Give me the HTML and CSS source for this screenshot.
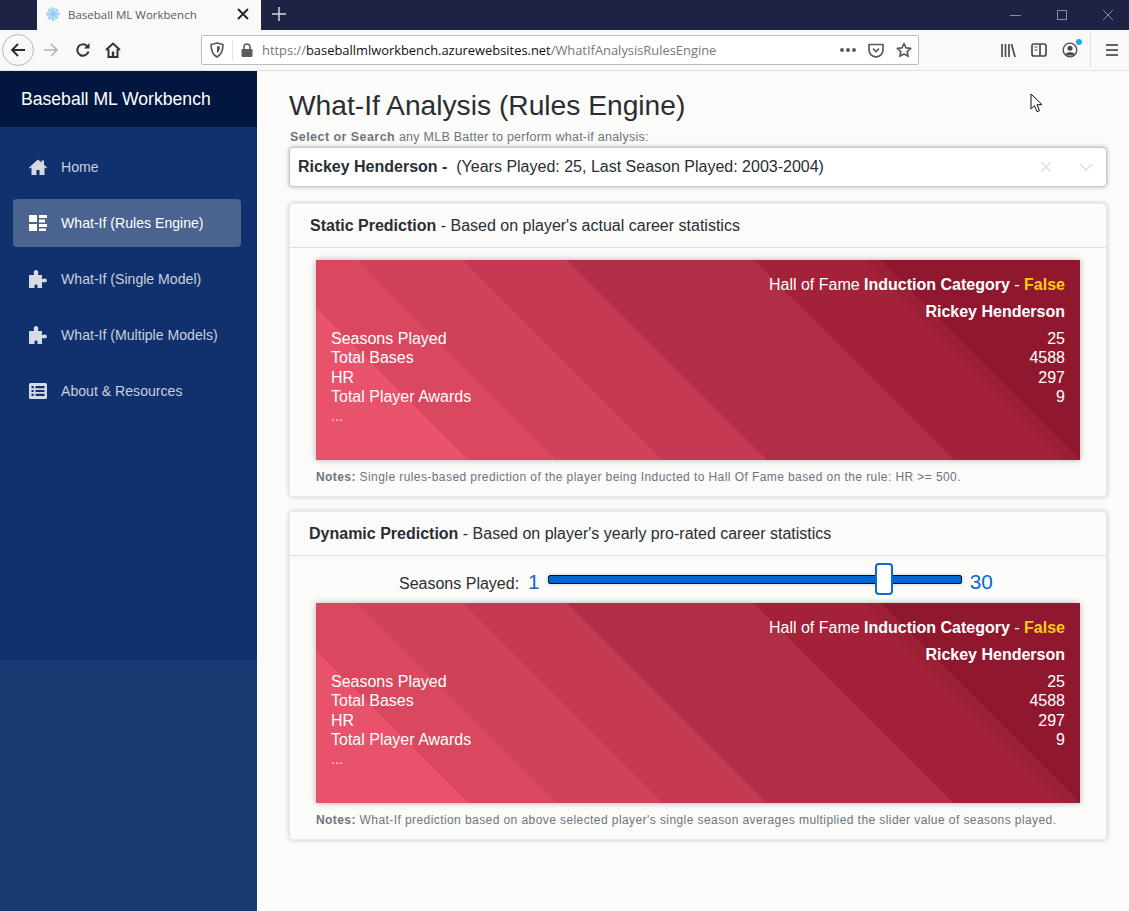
FILE: index.html
```html
<!DOCTYPE html>
<html lang="en">
<head>
    <meta charset="UTF-8">
    <title>Baseball ML Workbench</title>
    <link rel="stylesheet" href="styles.css">
</head>
<body>
    <!-- browser title bar -->
    <div class="titlebar">
        <div class="tab">
            <svg class="tab-logo" viewBox="0 0 16 16" width="16" height="16"><circle cx="8" cy="8" r="6.5" fill="#bfe3f5"/><path d="M8 1v14M1 8h14M3 3l10 10M13 3L3 13" stroke="#7cc6ea"/></svg>
            <span class="tab-title">Baseball ML Workbench</span>
            <svg class="tab-close" viewBox="0 0 12 12" width="12" height="12"><path d="M1 1l10 10M11 1L1 11" stroke="#222" stroke-width="1.8"/></svg>
        </div>
        <svg class="newtab" viewBox="0 0 14 14" width="14" height="14"><path d="M7 0v14M0 7h14" stroke="#d5d6de" stroke-width="1.5"/></svg>
        <div class="win-controls">
            <svg viewBox="0 0 12 12" width="12" height="12"><path d="M0 6.5h11" stroke="#8a8da3"/></svg>
            <svg viewBox="0 0 12 12" width="12" height="12"><rect x="1.5" y="1.5" width="9" height="9" fill="none" stroke="#8a8da3"/></svg>
            <svg viewBox="0 0 12 12" width="12" height="12"><path d="M1 1l10 10M11 1L1 11" stroke="#8a8da3"/></svg>
        </div>
    </div>

    <!-- browser toolbar -->
    <div class="toolbar">
        <div class="back-btn">
            <svg viewBox="0 0 16 16" width="16" height="16"><path d="M15 8H2M8 2L2 8l6 6" fill="none" stroke="#2a2a2e" stroke-width="1.8"/></svg>
        </div>
        <svg class="tool-ic forward" viewBox="0 0 16 16" width="16" height="16"><path d="M1 8h13M8 2l6 6-6 6" fill="none" stroke="#b4b4b6" stroke-width="1.6"/></svg>
        <svg class="tool-ic reload" viewBox="0 0 16 16" width="16" height="16"><path d="M13.5 9.5A5.7 5.7 0 1 1 12 4" fill="none" stroke="#333" stroke-width="2"/><path d="M14.5 1v5.5H9z" fill="#333"/></svg>
        <svg class="tool-ic homeic" viewBox="0 0 16 16" width="16" height="16"><path d="M1 8l7-6.5L15 8" fill="none" stroke="#333" stroke-width="2"/><path d="M3.5 7v8h9V7" fill="none" stroke="#333" stroke-width="2"/><rect x="6.8" y="9.5" width="2.4" height="5" fill="#333"/></svg>
        <div class="urlbar">
            <svg class="url-shield" viewBox="0 0 14 16" width="14" height="16"><path d="M7 1l6 1.5c0 6-1.5 10-6 12.5C2.500 12.500 1 8.500 1 2.500z" fill="none" stroke="#555" stroke-width="1.6"/><path d="M7 4l3 .8c0 3-.8 5-3 6.500z" fill="#555"/></svg>
            <span class="url-sep"></span>
            <svg class="url-lock" viewBox="0 0 12 14" width="12" height="14"><path d="M3 6V4a3 3 0 0 1 6 0v2" fill="none" stroke="#5b5b5f" stroke-width="1.6"/><rect x="0.5" y="6" width="11" height="8" rx="1.2" fill="#5b5b5f"/></svg>
            <span class="url-text">https://<span class="url-host">baseballmlworkbench.azurewebsites.net</span>/WhatIfAnalysisRulesEngine</span>
            <span class="url-dots">
                <i></i><i></i><i></i>
            </span>
            <svg class="url-ic" viewBox="0 0 16 16" width="16" height="16"><path d="M1 2.5h14V8A7 6.8 0 0 1 1 8z" fill="none" stroke="#5b5b5f" stroke-width="1.7" stroke-linejoin="round"/><path d="M5 6.5l3 3 3-3" fill="none" stroke="#5b5b5f" stroke-width="1.7"/></svg>
            <svg class="url-ic" viewBox="0 0 16 16" width="16" height="16"><path d="M8 1.500l2 4.300 4.700.6-3.500 3.200.9 4.700L8 12l-4.100 2.300.9-4.700L1.300 6.400 6 5.800z" fill="none" stroke="#5b5b5f" stroke-width="1.7" stroke-linejoin="round"/></svg>
        </div>
        <div class="tool-right">
            <svg viewBox="0 0 16 16" width="16" height="16"><path d="M2 2v13M5.500 2v13M9 2v13M11.500 2l3.500 13" fill="none" stroke="#4a4a4f" stroke-width="1.7"/></svg>
            <svg viewBox="0 0 16 16" width="16" height="16"><rect x="1" y="2" width="14" height="12" rx="2" fill="none" stroke="#4a4a4f" stroke-width="1.7"/><path d="M9 2v12" stroke="#4a4a4f" stroke-width="1.7"/><path d="M3.500 5h3M3.500 8h3" stroke="#4a4a4f"/></svg>
            <div class="account">
                <svg viewBox="0 0 16 16" width="16" height="16"><circle cx="8" cy="8" r="6.8" fill="none" stroke="#4a4a4f" stroke-width="1.3"/><circle cx="8" cy="6.2" r="2.5" fill="#4a4a4f"/><path d="M3.500 12c1-2.500 8-2.500 9 0-1.500 2-7.500 2-9 0z" fill="#4a4a4f"/></svg>
                <span class="account-dot"></span>
            </div>
            <span class="tool-sep"></span>
            <svg viewBox="0 0 14 14" width="14" height="14"><path d="M1 2h12M1 7h12M1 12h12" stroke="#333" stroke-width="1.7"/></svg>
        </div>
    </div>

    <div class="app">
        <div class="sidebar">
            <div class="brand">Baseball ML Workbench</div>
            <div class="nav">
                <div class="nav-item">
                    <svg class="nav-ic" viewBox="0 0 18 16"><path d="M9 .5L0 8.500l1 1 1.500-1.200V16h5v-5h3v5h5V8.300L17 9.500l1-1-3-2.700V1.500h-2.500v2z"/></svg>
                    <span>Home</span>
                </div>
                <div class="nav-item active">
                    <svg class="nav-ic" viewBox="0 0 18 16"><path d="M0 0h8v7H0zM0 9h8v7H0zM10 0h8v3h-8zM10 4.500h6v3h-6zM10 9h8v3h-8zM10 13.500h7V16h-7z"/></svg>
                    <span>What-If (Rules Engine)</span>
                </div>
                <div class="nav-item">
                    <svg class="nav-ic puzzle" viewBox="0 0 18 18"><path d="M0 5h4.500C5.500 5 5 4 4.700 3.300 4.300 1.800 5.500 0 7 0s2.700 1.800 2.300 3.300C9 4 8.500 5 9.500 5H13v3.500c0 1 .9.500 1.700.2C16 8.300 18 9 18 10.500S16 12.700 14.700 12.300c-.8-.3-1.700-.8-1.700.2V18H8.500v-2.500c0-1.500-3-1.500-3 0V18H0z"/></svg>
                    <span>What-If (Single Model)</span>
                </div>
                <div class="nav-item">
                    <svg class="nav-ic puzzle" viewBox="0 0 18 18"><path d="M0 5h4.500C5.500 5 5 4 4.700 3.300 4.300 1.800 5.500 0 7 0s2.700 1.800 2.300 3.300C9 4 8.500 5 9.500 5H13v3.500c0 1 .9.500 1.700.2C16 8.300 18 9 18 10.500S16 12.700 14.700 12.300c-.8-.3-1.700-.8-1.700.2V18H8.500v-2.500c0-1.500-3-1.500-3 0V18H0z"/></svg>
                    <span>What-If (Multiple Models)</span>
                </div>
                <div class="nav-item">
                    <svg class="nav-ic" viewBox="0 0 18 16"><path fill-rule="evenodd" d="M1.500 0h15A1.500 1.500 0 0 1 18 1.500v13a1.500 1.500 0 0 1-1.500 1.500h-15A1.500 1.500 0 0 1 0 14.500v-13A1.500 1.500 0 0 1 1.500 0zM2.500 3v2.200h2.200V3zM6.500 3v2.200h9V3zM2.500 6.900v2.200h2.200V6.900zM6.500 6.900v2.200h9V6.900zM2.500 10.800V13h2.200v-2.200zM6.500 10.800V13h9v-2.200z"/></svg>
                    <span>About &amp; Resources</span>
                </div>
            </div>
            <div class="sidebar-rest"></div>
        </div>

        <div class="main">
            <h1>What-If Analysis (Rules Engine)</h1>
            <div class="select-label"><b>Select or Search</b> any MLB Batter to perform what-if analysis:</div>
            <div class="select-box">
                <span class="select-value"><b>Rickey Henderson - </b> (Years Played: 25, Last Season Played: 2003-2004)</span>
                <svg class="select-ic" viewBox="0 0 12 12" width="12" height="12"><path d="M1 1l10 10M11 1L1 11" stroke="#dcdcdc" stroke-width="1.3"/></svg>
                <svg class="select-ic" viewBox="0 0 14 8" width="14" height="8"><path d="M1 1l6 6 6-6" fill="none" stroke="#dcdcdc" stroke-width="1.3"/></svg>
            </div>

            <div class="card">
                <div class="card-head"><b>Static Prediction</b> - Based on player's actual career statistics</div>
                <div class="card-body">
                    <div class="banner">
                        <div class="banner-title">Hall of Fame <b>Induction Category</b> - <b class="flag">False</b></div>
                        <div class="banner-name">Rickey Henderson</div>
                        <div class="stat"><span>Seasons Played</span><span>25</span></div>
                        <div class="stat"><span>Total Bases</span><span>4588</span></div>
                        <div class="stat"><span>HR</span><span>297</span></div>
                        <div class="stat"><span>Total Player Awards</span><span>9</span></div>
                        <div class="stat more"><span>...</span></div>
                    </div>
                    <div class="notes"><b>Notes:</b> Single rules-based prediction of the player being Inducted to Hall Of Fame based on the rule: HR &gt;= 500.</div>
                </div>
            </div>

            <div class="card">
                <div class="card-head dyn"><b>Dynamic Prediction</b> - Based on player's yearly pro-rated career statistics</div>
                <div class="slider-row">
                    <span class="slider-label">Seasons Played:</span>
                    <span class="slider-num min">1</span>
                    <div class="slider">
                        <span class="slider-thumb" style="left: 81.4%"></span>
                    </div>
                    <span class="slider-num max">30</span>
                </div>
                <div class="card-body tight">
                    <div class="banner">
                        <div class="banner-title">Hall of Fame <b>Induction Category</b> - <b class="flag">False</b></div>
                        <div class="banner-name">Rickey Henderson</div>
                        <div class="stat"><span>Seasons Played</span><span>25</span></div>
                        <div class="stat"><span>Total Bases</span><span>4588</span></div>
                        <div class="stat"><span>HR</span><span>297</span></div>
                        <div class="stat"><span>Total Player Awards</span><span>9</span></div>
                        <div class="stat more"><span>...</span></div>
                    </div>
                    <div class="notes"><b>Notes:</b> What-If prediction based on above selected player's single season averages multiplied the slider value of seasons played.</div>
                </div>
            </div>

            <!-- mouse pointer caught in the screenshot -->
            <svg class="cursor" viewBox="0 0 13 20" width="13" height="20"><path d="M1 1v15l3.500-3.300 2.500 6 2.500-1-2.500-6h5z" fill="#fff" stroke="#111"/></svg>
        </div>
    </div>
</body>
</html>
```

FILE: styles.css
```css
html, body {
    margin: 0;
    height: 100%;
}
body {
    font-family: "Liberation Sans", Arial, sans-serif;
    background-color: #fbfbf9;
    color: #212529;
    overflow: hidden;
}

/* browser chrome */
.titlebar {
    height: 30px;
    background: #1e2344;
    display: flex;
    align-items: center;
}
.tab {
    width: 224px;
    height: 30px;
    margin-left: 37px;
    background: #f9f9f9;
    display: flex;
    align-items: center;
    box-sizing: border-box;
    padding: 0 12px 2px 8px;
}
.tab-logo {
    flex: none;
}
.tab-title {
    font-family: "Open Sans", sans-serif;
    font-size: 11.5px;
    color: #5a5a60;
    margin-left: 7px;
    flex: 1;
}
.newtab {
    margin-left: 11px;
    margin-top: -3px;
}
.win-controls {
    margin-left: auto;
    display: flex;
    gap: 34px;
    padding-right: 15px;
}
.toolbar {
    height: 40px;
    background: #f9f9f9;
    border-bottom: 1px solid #e3e3e3;
    display: flex;
    align-items: center;
    position: relative;
}
.back-btn {
    width: 30px;
    height: 30px;
    margin-left: 2px;
    border: 1px solid #b9b9b9;
    border-radius: 50%;
    display: flex;
    align-items: center;
    justify-content: center;
    flex: none;
}
.tool-ic {
    flex: none;
}
.forward {
    margin-left: 9px;
}
.reload {
    margin-left: 16px;
}
.homeic {
    margin-left: 14px;
}
.urlbar {
    width: 716px;
    height: 28px;
    margin-left: 80px;
    background: #fff;
    border: 1px solid #bdbdbd;
    border-radius: 2px;
    display: flex;
    align-items: center;
    flex: none;
}
.url-shield {
    margin-left: 8px;
}
.url-sep {
    width: 1px;
    height: 20px;
    background: #e2e2e2;
    margin-left: 8px;
}
.url-lock {
    margin-left: 8px;
}
.url-text {
    font-family: "Open Sans", sans-serif;
    font-size: 12.9px;
    color: #777;
    margin-left: 9px;
    flex: 1;
    white-space: nowrap;
}
.url-host {
    color: #111;
}
.url-dots {
    display: flex;
    gap: 2px;
    margin-right: 12px;
}
.url-dots i {
    width: 4px;
    height: 4px;
    border-radius: 50%;
    background: #5b5b5f;
}
.url-ic {
    margin-right: 12px;
    flex: none;
}
.url-ic:last-child {
    margin-right: 6px;
}
.tool-right {
    display: flex;
    align-items: center;
    gap: 15px;
    margin-left: 81px;
}
.account {
    position: relative;
    height: 16px;
}
.account-dot {
    position: absolute;
    top: -3px;
    right: -4px;
    width: 6px;
    height: 6px;
    border-radius: 50%;
    background: #1fa8f5;
}
.tool-sep {
    width: 1px;
    height: 34px;
    background: #d9dde5;
    margin: 0 -1px 0 -3px;
}

/* page */
.app {
    display: flex;
    height: calc(100% - 71px);
}
.sidebar {
    width: 257px;
    flex: none;
    display: flex;
    flex-direction: column;
    background: #1a3a74;
}
.brand {
    height: 56px;
    line-height: 56px;
    background: #02173f;
    color: #fff;
    font-size: 17.6px;
    padding-left: 21px;
}
.nav {
    height: 533px;
    background: #10316e;
    padding: 16px 16px 0 13px;
    box-sizing: border-box;
}
.nav-item {
    height: 48px;
    margin-bottom: 8px;
    border-radius: 4px;
    display: flex;
    align-items: center;
    padding-left: 16px;
    color: #c9cfdc;
    font-size: 14.1px;
}
.nav-item span {
    margin-left: 14px;
}
.nav-item.active {
    background: #4a638f;
    color: #fff;
}
.nav-ic {
    width: 18px;
    height: 16px;
    fill: #d6dae3;
    flex: none;
}
.nav-ic.puzzle {
    height: 18px;
}
.nav-item.active .nav-ic {
    fill: #fff;
}
.sidebar-rest {
    flex: 1;
}
.main {
    flex: 1;
    padding: 0 22px 0 32px;
    position: relative;
}
h1 {
    margin: 18px 0 0;
    font-size: 28.2px;
    font-weight: 400;
    line-height: 32px;
    height: 40px;
    color: #2a2e33;
}
.select-label {
    font-size: 12.5px;
    line-height: 16px;
    color: #6c757d;
    padding-left: 1px;
    height: 18px;
    letter-spacing: .25px;
}
.select-label b {
    letter-spacing: .45px;
}
.select-box {
    height: 40px;
    box-sizing: border-box;
    background: #fff;
    border: 1px solid #c8c8c8;
    border-radius: 4px;
    box-shadow: 0 0 4px rgba(0, 0, 0, .3);
    display: flex;
    align-items: center;
    padding: 0 13px 0 8px;
    font-size: 16px;
    color: #2a2e33;
    margin-bottom: 16px;
}
.select-value {
    flex: 1;
    white-space: pre;
}
.select-ic {
    margin-left: 27px;
}
.card {
    background: #fbfbf9;
    border: 1px solid #ebebe9;
    border-radius: 4px;
    box-shadow: 0 0 4px rgba(0, 0, 0, .22);
    margin-bottom: 14px;
}
.card-head {
    height: 43px;
    line-height: 44px;
    border-bottom: 1px solid #dedede;
    padding-left: 20px;
    font-size: 16px;
    color: #2a2e33;
}
.card-head.dyn {
    padding-left: 19px;
}
.card-body {
    padding: 12px 26px 0;
}
.card-body.tight {
    padding-top: 0;
}
.banner {
    height: 200px;
    box-sizing: border-box;
    padding: 14px 15px 0;
    color: #fff;
    font-size: 16px;
    box-shadow: 0 0 6px rgba(0, 0, 0, .3);
    background: linear-gradient(45deg,
        #e8536b 15.8%, #d9485f 15.8%, #d9485f 25%,
        #d0425a 25%, #d0425a 35.9%, #c33a52 35.9%, #c33a52 46.7%,
        #b22e46 46.7%, #b22e46 66.1%, #a3223a 66.1%, #a3223a 77.5%,
        #9b1f35 77.5%, #9b1f35 79.3%, #90182e 79.3%);
}
.banner-title {
    text-align: right;
    line-height: 22px;
}
.banner-name {
    text-align: right;
    font-weight: 700;
    line-height: 22px;
    margin-top: 5px;
    margin-bottom: 6px;
}
.flag {
    color: #ffcb14;
}
.stat {
    display: flex;
    justify-content: space-between;
    line-height: 19.4px;
}
.stat.more {
    font-size: 14px;
    opacity: .8;
}
.notes {
    font-size: 12px;
    color: #6c757d;
    line-height: 14px;
    margin-top: 10px;
    padding-bottom: 12px;
    letter-spacing: .42px;
}
.slider-row {
    height: 47px;
    box-sizing: border-box;
    padding: 9px 0 0 109px;
    display: flex;
    align-items: center;
    font-size: 16px;
}
.slider-label {
    color: #2a2e33;
}
.slider-num {
    font-size: 20.8px;
    color: #0b69d0;
    margin-bottom: 4px;
}
.slider-num.min {
    margin-left: 9px;
}
.slider {
    width: 414px;
    height: 9px;
    box-sizing: border-box;
    margin: 0 8px 0 8px;
    background: #0066d6;
    border: 1px solid #111;
    border-radius: 2px;
    box-shadow: 0 0 4px rgba(0, 0, 0, .2);
    position: relative;
    top: -5px;
}
.slider-thumb {
    position: absolute;
    top: -13px;
    width: 18px;
    height: 32px;
    box-sizing: border-box;
    background: #fff;
    border: 2px solid #0b69d0;
    border-radius: 4px;
    margin-left: -9px;
}
.cursor {
    position: absolute;
    top: 22px;
    left: 773px;
}
```
